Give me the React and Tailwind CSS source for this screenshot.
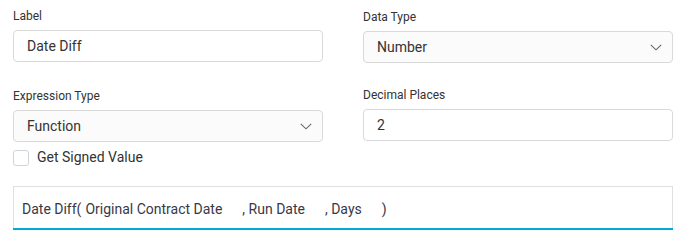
const Chevron = () => (
  <svg width="12" height="7" viewBox="0 0 12 7" className="shrink-0">
    <path d="M0.8 0.8 L6 5.8 L11.2 0.8" fill="none" stroke="#666" strokeWidth="1.1" />
  </svg>
);

function Field({ label, children }) {
  return (
    <div className="flex flex-col">
      <span className="text-[12px] leading-[16px] text-[#333] mb-[6px]">{label}</span>
      {children}
    </div>
  );
}

function TextBox({ value }) {
  return (
    <div className="h-[32px] border border-[#d9d9d9] rounded-[4px] bg-white flex items-center px-[13px] text-[14px] text-[#333]">
      {value}
    </div>
  );
}

function SelectBox({ value }) {
  return (
    <div className="h-[32px] border border-[#d9d9d9] rounded-[4px] bg-[#fbfbfb] flex items-center justify-between pl-[13px] pr-[10px] text-[14px] text-[#333]">
      <span>{value}</span>
      <Chevron />
    </div>
  );
}

export default function App() {
  return (
    <div
      className="w-[681px] h-[242px] bg-white pl-[13px] pr-[8px] pt-[8px]"
      style={{ fontFamily: "Roboto, 'Liberation Sans', sans-serif" }}
    >
      <div className="grid grid-cols-2 gap-x-[40px]">
        <Field label="Label">
          <TextBox value="Date Diff" />
        </Field>
        <div className="pt-[1px]">
          <Field label="Data Type">
            <SelectBox value="Number" />
          </Field>
        </div>
      </div>

      <div className="grid grid-cols-2 gap-x-[40px] mt-[25px]">
        <div>
          <Field label="Expression Type">
            <SelectBox value="Function" />
          </Field>
          <label className="flex items-center gap-[8px] mt-[5px]">
            <span className="w-[16px] h-[16px] border border-[#cfd4da] rounded-[3px] bg-white" />
            <span className="text-[14px] text-[#333]">Get Signed Value</span>
          </label>
        </div>
        <div className="-mt-[1px]">
          <Field label="Decimal Places">
            <TextBox value="2" />
          </Field>
        </div>
      </div>

      <div className="mt-[18px] h-[44px] border border-[#e0e0e0] border-b-0 flex flex-col">
        <div className="flex-1 flex items-center pl-[8px] text-[14px] text-[#383848] pt-[4px]">
          <span>Date Diff(</span>
          <span className="ml-[4px] pr-[20px]">Original Contract Date</span>
          <span className="pr-[20px]">, Run Date</span>
          <span className="pr-[20px]">, Days</span>
          <span>)</span>
        </div>
        <div className="h-[2px] bg-[#00acd6] -mx-[1px]" />
      </div>
    </div>
  );
}
